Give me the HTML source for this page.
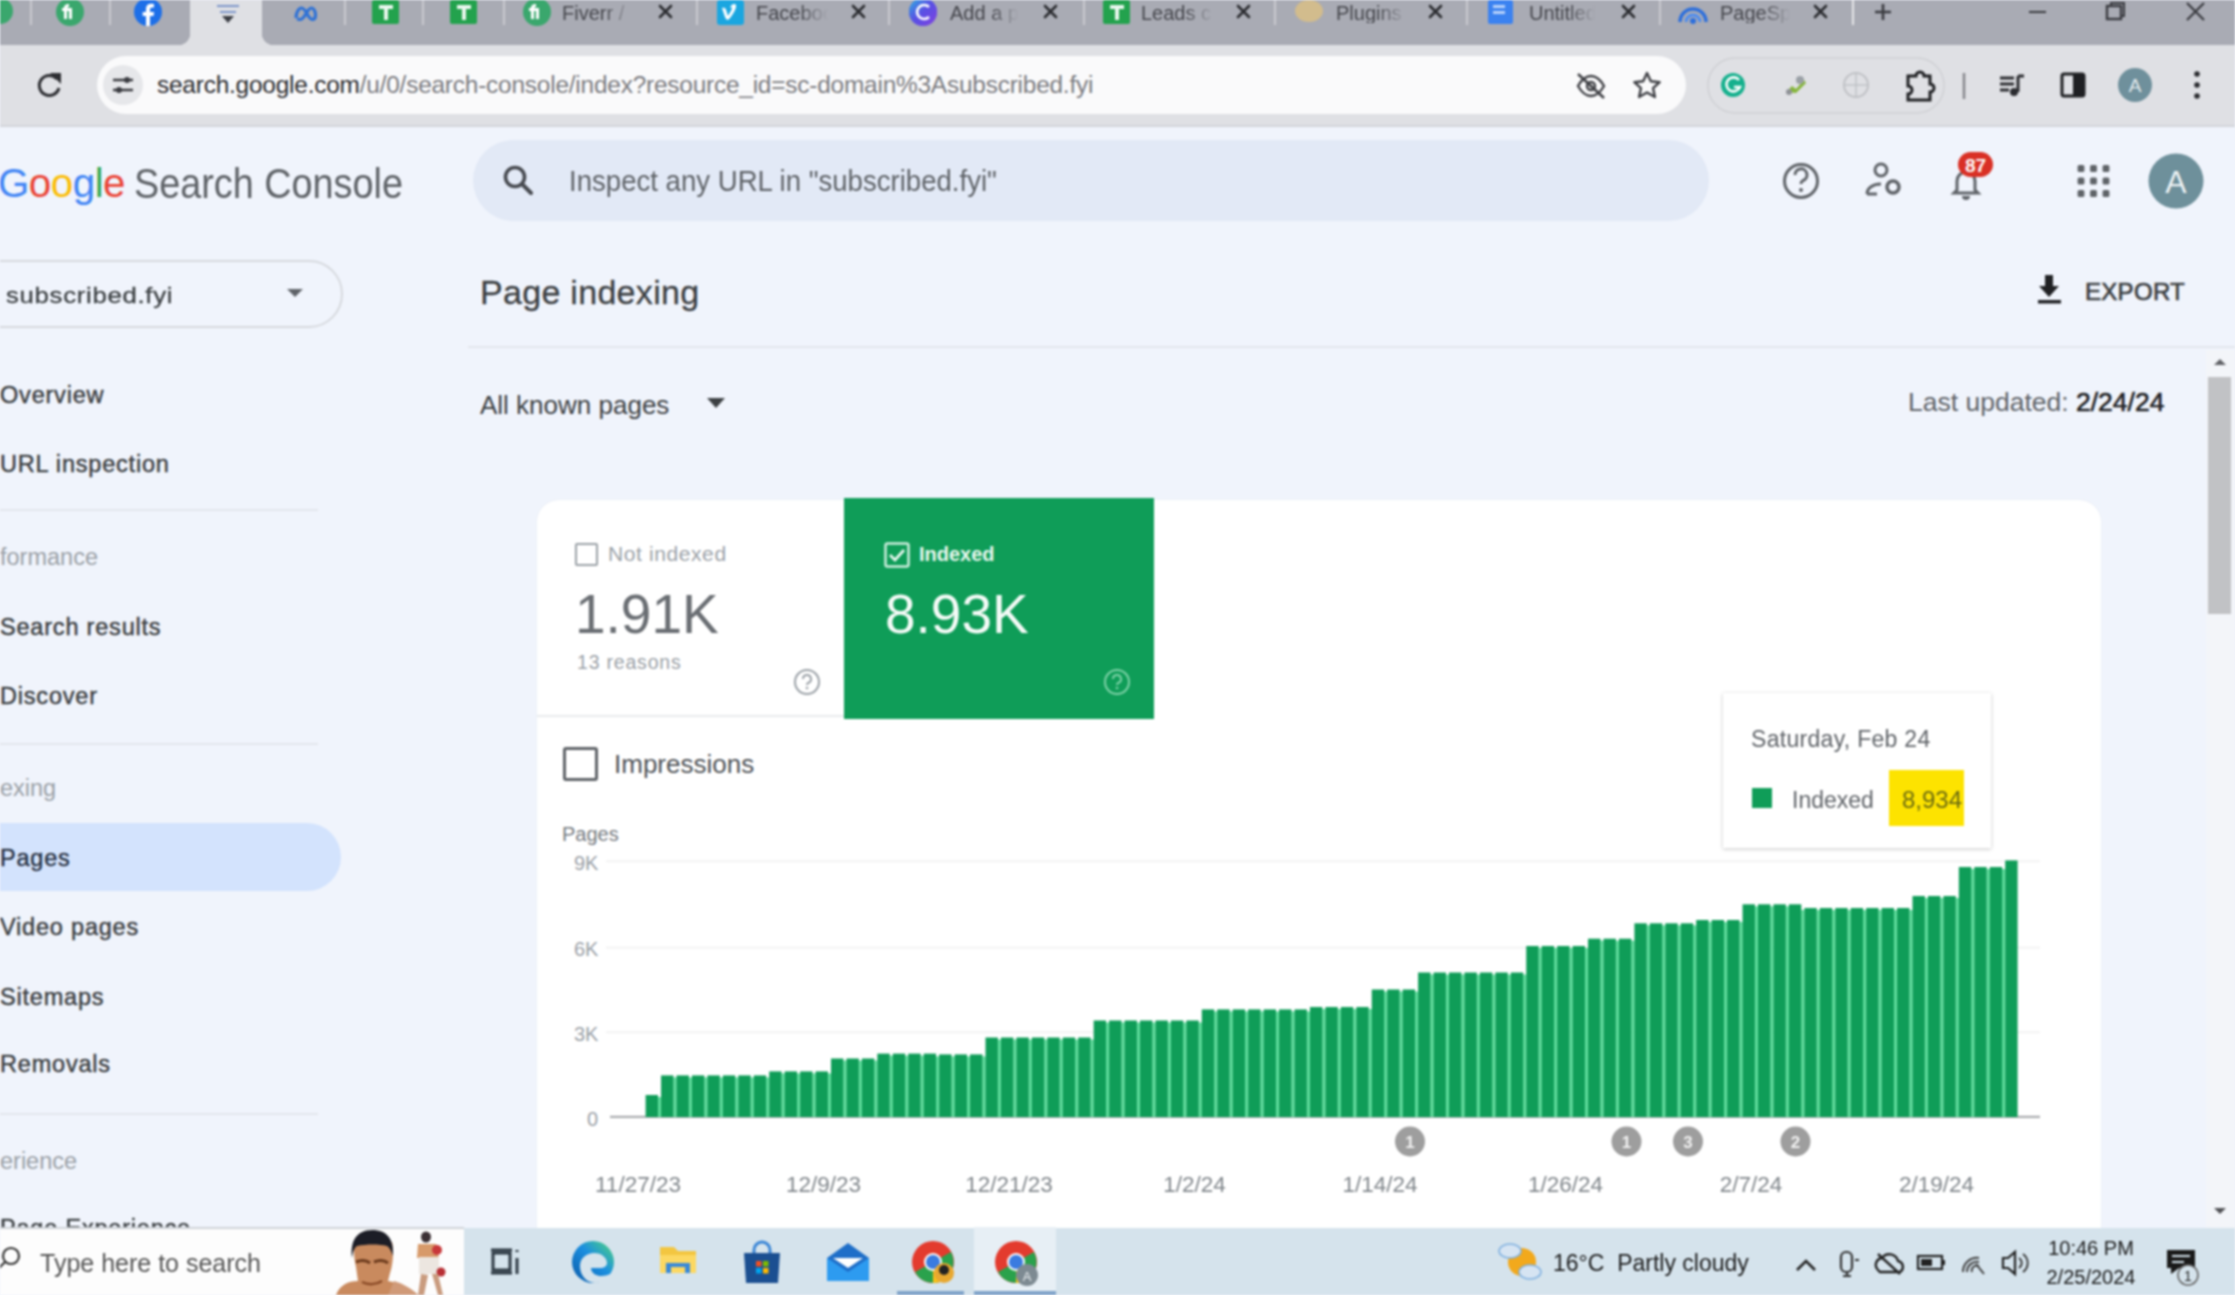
<!DOCTYPE html>
<html><head><meta charset="utf-8">
<style>
*{margin:0;padding:0;box-sizing:border-box}
html{background:#f0f4fc}body{width:2235px;height:1295px;overflow:hidden;background:#f0f4fc;font-family:"Liberation Sans",sans-serif;color:#3c4043}
.a{position:absolute;white-space:nowrap;line-height:1}
#tabs{position:absolute;left:0;top:0;width:2235px;height:46px;background:#a9abb4}
#toolbar{position:absolute;left:0;top:45px;width:2235px;height:80px;background:#dfe0e4}
#tbline{position:absolute;left:0;top:125px;width:2235px;height:2px;background:#d3d5da}
#omni{position:absolute;left:97px;top:56px;width:1589px;height:58px;border-radius:29px;background:#fafafb}
#page{position:absolute;left:0;top:127px;width:2235px;height:1101px;background:#f0f4fc}
.sep{position:absolute;top:0;width:2px;height:25px;background:#c9cad0}
.tt{position:absolute;white-space:nowrap;overflow:hidden;top:3px;font-size:20px;color:#45464c;line-height:1}
.fade{-webkit-mask-image:linear-gradient(90deg,#000 60%,transparent)}
.nav{position:absolute;left:0;font-size:23.5px;color:#3c4043;-webkit-text-stroke:0.45px #3c4043;letter-spacing:0.8px;line-height:1;white-space:nowrap}
.sec{position:absolute;left:0;font-size:23.5px;color:#9aa0a6;line-height:1;white-space:nowrap}
.div{position:absolute;left:0;width:318px;height:2px;background:#e3e6ec}
#card{position:absolute;left:537px;top:500px;width:1564px;height:760px;background:#fff;border-radius:22px;box-shadow:0 0 2px rgba(0,0,0,0.06)}
#taskbar{position:absolute;left:0;top:1228px;width:2235px;height:67px;background:#d5e3ec}
#root{position:absolute;left:0;top:0;width:2235px;height:1295px;overflow:hidden;filter:blur(1px)}
</style></head><body><div id="root">
<!-- ============ TAB STRIP ============ -->
<div id="tabs"></div>
<div class="a" style="left:190px;top:0;width:72px;height:46px;background:#dfe0e4"></div>
<div class="a" style="left:178px;top:33px;width:12px;height:12px;background:radial-gradient(circle at 0 0,#a9abb4 12px,#dfe0e4 12.5px)"></div>
<div class="a" style="left:262px;top:33px;width:12px;height:12px;background:radial-gradient(circle at 100% 0,#a9abb4 12px,#dfe0e4 12.5px)"></div>
<div class="sep" style="left:30px"></div>
<div class="sep" style="left:109px"></div>
<div class="sep" style="left:344px"></div>
<div class="sep" style="left:422px"></div>
<div class="sep" style="left:503px"></div>
<div class="sep" style="left:696px"></div>
<div class="sep" style="left:888px"></div>
<div class="sep" style="left:1083px"></div>
<div class="sep" style="left:1274px"></div>
<div class="sep" style="left:1466px"></div>
<div class="sep" style="left:1659px"></div>
<div class="sep" style="left:1852px;background:#e6e7ea"></div>
<svg class="a" style="left:0;top:0" width="2235" height="46" viewBox="0 0 2235 46">
 <!-- partial green -->
 <circle cx="0" cy="11" r="13" fill="#3aa76d"/>
 <!-- fiverr -->
 <circle cx="70" cy="12" r="14" fill="#3aa76d"/>
 <path d="M64 19v-8h-2v-3h2c0-3 2-4 5-4v3c-1 0-2 0-2 1h5v11h-3v-8h-2v8z" fill="#fff"/>
 <!-- facebook -->
 <circle cx="148" cy="12" r="14" fill="#1d6fe8"/>
 <path d="M150 26v-10h3.5l.5-4h-4v-2.5c0-1 .4-2 2-2h2v-3.5c-.5 0-1.8-.2-3-.2-3 0-5 1.8-5 5v3.2h-3.3v4h3.3v10z" fill="#fff"/>
 <!-- active tab icon -->
 <g fill="none" stroke="#7b94c8" stroke-width="2.2"><path d="M217 6h22M220 12h16"/></g>
 <path d="M222 16l6 7 6-7z" fill="#3a3d44"/>
 <!-- meta -->
 <path d="M296 18c0-6 3-10 5.5-10 3 0 5 5 6.5 7.5 1.5 2.5 3 4 4.5 4 2 0 3-2 3-4.5 0-4-2-7-4-7-2.5 0-4.5 4-6 6.5-1.5 2.5-3.5 5-5.5 5-2.5 0-4-2-4-1.5z" fill="none" stroke="#2f72d6" stroke-width="3.2"/>
 <!-- sheets -->
 <rect x="372" y="0" width="27" height="24" rx="2" fill="#23a24d"/><path d="M379 5h14v4h-5v11h-4v-11h-5z" fill="#eaf7ee"/>
 <rect x="450" y="0" width="27" height="24" rx="2" fill="#23a24d"/><path d="M457 5h14v4h-5v11h-4v-11h-5z" fill="#eaf7ee"/>
 <!-- fiverr tab -->
 <circle cx="537" cy="12" r="14" fill="#3aa76d"/>
 <path d="M531 19v-8h-2v-3h2c0-3 2-4 5-4v3c-1 0-2 0-2 1h5v11h-3v-8h-2v8z" fill="#fff"/>
 <!-- vimeo -->
 <rect x="717" y="0" width="27" height="25" rx="3" fill="#1aa6e0"/><path d="M722 8c3-1 4 0 5 5l1 3c1-2 4-6 4-8 0-1-1-1-2 0 1-4 5-5 6-3 1 3-4 11-7 14-2 2-3 0-4-2z" fill="#fff"/>
 <!-- canva -->
 <circle cx="923" cy="12" r="14" fill="#5a52e0"/><circle cx="923" cy="12" r="14" fill="url(#cg)"/>
 <defs><linearGradient id="cg" x1="0" y1="0" x2="1" y2="1"><stop offset="0" stop-color="#22c5e0"/><stop offset=".5" stop-color="#5b4ee6" stop-opacity=".6"/><stop offset="1" stop-color="#8a3de0"/></linearGradient></defs>
 <path d="M929 7a7 7 0 1 0 0 10" fill="none" stroke="#fff" stroke-width="2.6"/>
 <!-- sheets 2 -->
 <rect x="1103" y="0" width="27" height="24" rx="2" fill="#23a24d"/><path d="M1110 5h14v4h-5v11h-4v-11h-5z" fill="#eaf7ee"/>
 <!-- plugin blob -->
 <ellipse cx="1309" cy="11" rx="14" ry="11" fill="#d9be86" opacity=".85"/>
 <!-- docs -->
 <rect x="1488" y="0" width="25" height="24" rx="2" fill="#3b82f0"/><path d="M1493 5h12v3h-12zM1493 11h12v3h-12z" fill="#b9d3fb"/>
 <!-- pagespeed -->
 <path d="M1680 22a13 13 0 0 1 26 0" fill="none" stroke="#2d6fdc" stroke-width="3.5"/><path d="M1686 22a7 7 0 0 1 14 0" fill="none" stroke="#4d8cf0" stroke-width="3"/><circle cx="1693" cy="21" r="3" fill="#2d6fdc"/>
 <!-- close Xs -->
 <g stroke="#2b2c30" stroke-width="2.6" stroke-linecap="round">
  <path d="M660 6l11 11M671 6l-11 11"/>
  <path d="M853 6l11 11M864 6l-11 11"/>
  <path d="M1045 6l11 11M1056 6l-11 11"/>
  <path d="M1238 6l11 11M1249 6l-11 11"/>
  <path d="M1430 6l11 11M1441 6l-11 11"/>
  <path d="M1623 6l11 11M1634 6l-11 11"/>
  <path d="M1815 6l11 11M1826 6l-11 11"/>
 </g>
 <!-- plus -->
 <path d="M1883 4v16M1875 12h16" stroke="#3a3b40" stroke-width="2.6"/>
 <!-- window controls -->
 <path d="M2029 12h17" stroke="#3a3b40" stroke-width="2"/>
 <rect x="2107" y="6" width="14" height="13" fill="none" stroke="#3a3b40" stroke-width="2.4"/><path d="M2111 6v-3h13v13h-3" fill="none" stroke="#3a3b40" stroke-width="2"/>
 <path d="M2187 3l17 17M2204 3l-17 17" stroke="#3a3b40" stroke-width="2.2"/>
</svg>
<div class="tt fade" style="left:562px;width:70px">Fiverr /</div>
<div class="tt fade" style="left:756px;width:72px">Facebook</div>
<div class="tt fade" style="left:950px;width:68px">Add a p</div>
<div class="tt fade" style="left:1141px;width:72px">Leads c</div>
<div class="tt fade" style="left:1336px;width:70px">Plugins</div>
<div class="tt fade" style="left:1529px;width:66px">Untitled</div>
<div class="tt fade" style="left:1720px;width:70px">PageSpeed</div>

<!-- ============ TOOLBAR ============ -->
<div id="toolbar"></div>
<div id="tbline"></div>
<div id="omni"></div>
<svg class="a" style="left:0;top:45px" width="2235" height="82" viewBox="0 45 2235 82">
 <!-- reload -->
 <path d="M57 79a10 10 0 1 0 2 9" fill="none" stroke="#2e2f33" stroke-width="3"/>
 <path d="M50 73h11v11z" fill="#2e2f33"/>
 <!-- tune icon -->
 <circle cx="123" cy="85" r="20" fill="#e6e7ea"/>
 <path d="M113 80h20M113 90h20" stroke="#3a3b40" stroke-width="2.5"/>
 <circle cx="127" cy="80" r="3" fill="#3a3b40"/><circle cx="119" cy="90" r="3" fill="#3a3b40"/>
 <!-- eye slash -->
 <path d="M1578 86c4-7 9-10 13-10s9 3 13 10c-4 7-9 10-13 10s-9-3-13-10z" fill="none" stroke="#3f4045" stroke-width="2.4"/>
 <circle cx="1591" cy="86" r="4" fill="none" stroke="#3f4045" stroke-width="2.4"/>
 <path d="M1578 74l26 24" stroke="#3f4045" stroke-width="2.6"/>
 <!-- star -->
 <path d="M1647 73l3.8 8.2 8.9 1-6.6 6 1.8 8.8-7.9-4.5-7.9 4.5 1.8-8.8-6.6-6 8.9-1z" fill="none" stroke="#3f4045" stroke-width="2.4" stroke-linejoin="round"/>
 <!-- ext pill -->
 <rect x="1708" y="58" width="236" height="55" rx="27" fill="none" stroke="#cfd0d4" stroke-width="1.5"/>
 <circle cx="1733" cy="85" r="12" fill="#15b08d"/><path d="M1739 80a7 7 0 1 0 1 7h-6" fill="none" stroke="#fff" stroke-width="2.6"/>
 <path d="M1786 92l6-6 4 3 8-9 2 3-10 10z" fill="#86b63c"/><circle cx="1800" cy="80" r="4" fill="#9aa0a6"/><circle cx="1789" cy="92" r="3" fill="#8f9297"/>
 <circle cx="1856" cy="85" r="12" fill="none" stroke="#c0c2c6" stroke-width="2"/><path d="M1844 85h24M1856 73v24" stroke="#c0c2c6" stroke-width="1.5"/>
 <path d="M1908 76h8a4 4 0 0 1 8 0h6v8a4 4 0 0 1 0 8v8h-22v-6a4 4 0 0 0 0-8z" fill="none" stroke="#1f2023" stroke-width="3"/>
 <path d="M1964 73v26" stroke="#85878c" stroke-width="2.5"/>
 <!-- media -->
 <path d="M2000 78h14M2000 84h14M2000 90h9" stroke="#2b2c30" stroke-width="3"/><path d="M2018 76v16" stroke="#2b2c30" stroke-width="3"/><circle cx="2014" cy="92" r="4" fill="#2b2c30"/><path d="M2018 76h6" stroke="#2b2c30" stroke-width="3"/>
 <!-- side panel -->
 <rect x="2062" y="74" width="22" height="22" rx="2" fill="none" stroke="#1f2023" stroke-width="3"/><rect x="2073" y="74" width="11" height="22" fill="#1f2023"/>
 <!-- avatar -->
 <circle cx="2135" cy="85" r="17" fill="#6f909c"/>
 <text x="2135" y="92" font-family="Liberation Sans" font-size="19" fill="#e8eef0" text-anchor="middle">A</text>
 <!-- kebab -->
 <circle cx="2197" cy="74" r="2.8" fill="#2b2c30"/><circle cx="2197" cy="85" r="2.8" fill="#2b2c30"/><circle cx="2197" cy="96" r="2.8" fill="#2b2c30"/>
</svg>
<div class="a" style="left:157px;top:73px;font-size:24.4px;color:#7a7b80;letter-spacing:-0.2px"><span style="color:#2a2b2f">search.google.com</span>/u/0/search-console/index?resource_id=sc-domain%3Asubscribed.fyi</div>

<!-- ============ PAGE ============ -->
<div id="page"></div>
<!-- header -->
<div class="a" style="left:-2px;top:164px;font-size:40.3px;letter-spacing:-0.5px"><span style="color:#4285f4">G</span><span style="color:#ea4335">o</span><span style="color:#fbbc05">o</span><span style="color:#4285f4">g</span><span style="color:#34a853">l</span><span style="color:#ea4335">e</span></div>
<div class="a" style="left:134px;top:163px;font-size:42px;color:#5f6368;transform:scaleX(0.9);transform-origin:0 0">Search Console</div>
<div class="a" style="left:473px;top:140px;width:1236px;height:81px;border-radius:41px;background:#e2e9f6"></div>
<svg class="a" style="left:0;top:127px" width="2235" height="120" viewBox="0 127 2235 120">
 <circle cx="515" cy="177" r="9.5" fill="none" stroke="#474a50" stroke-width="3.6"/>
 <path d="M522 184l9 9" stroke="#474a50" stroke-width="4" stroke-linecap="round"/>
 <!-- help -->
 <circle cx="1801" cy="181" r="16.5" fill="none" stroke="#5f6368" stroke-width="3"/>
 <path d="M1795 175a6 6 0 1 1 8 5.5c-1.5.8-2 1.7-2 3.5" fill="none" stroke="#5f6368" stroke-width="3"/>
 <circle cx="1801" cy="190" r="2" fill="#5f6368"/>
 <!-- admin -->
 <circle cx="1881" cy="170" r="6" fill="none" stroke="#5f6368" stroke-width="3"/>
 <path d="M1867 194c0-6 6-10 14-10" fill="none" stroke="#5f6368" stroke-width="3"/>
 <path d="M1867 194h10" stroke="#5f6368" stroke-width="3"/>
 <circle cx="1893" cy="187" r="6" fill="none" stroke="#5f6368" stroke-width="3.5"/>
 <!-- bell -->
 <path d="M1957 190v-9a9 9 0 0 1 18 0v9l3 3h-24z" fill="none" stroke="#5f6368" stroke-width="3"/>
 <path d="M1962 196a4 4 0 0 0 8 0" fill="#5f6368"/>
 <rect x="1958" y="152" width="35" height="25" rx="12.5" fill="#d93025"/>
 <text x="1975.5" y="172" font-family="Liberation Sans" font-size="19" font-weight="bold" fill="#fff" text-anchor="middle">87</text>
 <!-- apps -->
 <g fill="#5f6368"><rect x="2077.6" y="165.1" width="6.8" height="6.8" rx="1.5"/><rect x="2090.1" y="165.1" width="6.8" height="6.8" rx="1.5"/><rect x="2102.6" y="165.1" width="6.8" height="6.8" rx="1.5"/><rect x="2077.6" y="177.6" width="6.8" height="6.8" rx="1.5"/><rect x="2090.1" y="177.6" width="6.8" height="6.8" rx="1.5"/><rect x="2102.6" y="177.6" width="6.8" height="6.8" rx="1.5"/><rect x="2077.6" y="190.1" width="6.8" height="6.8" rx="1.5"/><rect x="2090.1" y="190.1" width="6.8" height="6.8" rx="1.5"/><rect x="2102.6" y="190.1" width="6.8" height="6.8" rx="1.5"/></g>
 <circle cx="2176" cy="181" r="27.5" fill="#6e909b"/>
 <text x="2176" y="193" font-family="Liberation Sans" font-size="32" fill="#eef3f5" text-anchor="middle">A</text>
</svg>
<div class="a" style="left:569px;top:166px;font-size:29.5px;color:#5f6368;transform:scaleX(0.935);transform-origin:0 0">Inspect any URL in "subscribed.fyi"</div>

<!-- sidebar -->
<div class="a" style="left:-40px;top:260px;width:383px;height:68px;border:2px solid #d6d9de;border-radius:34px"></div>
<div class="a" style="left:6px;top:285px;font-size:22px;color:#3c4043;-webkit-text-stroke:0.3px #3c4043;letter-spacing:0.6px;transform:scaleX(1.17);transform-origin:0 0">subscribed.fyi</div>
<svg class="a" style="left:286px;top:288px" width="18" height="10"><path d="M1 1h16l-8 8z" fill="#5f6368"/></svg>
<div class="nav" style="top:384px">Overview</div>
<div class="nav" style="top:453px">URL inspection</div>
<div class="div" style="top:509px"></div>
<div class="sec" style="top:546px">formance</div>
<div class="nav" style="top:616px">Search results</div>
<div class="nav" style="top:685px">Discover</div>
<div class="div" style="top:743px"></div>
<div class="sec" style="top:777px">exing</div>
<div class="a" style="left:-40px;top:823px;width:381px;height:68px;border-radius:34px;background:#d3e3fd"></div>
<div class="nav" style="top:847px;color:#1f2f4a">Pages</div>
<div class="nav" style="top:916px">Video pages</div>
<div class="nav" style="top:986px">Sitemaps</div>
<div class="nav" style="top:1053px">Removals</div>
<div class="div" style="top:1113px"></div>
<div class="sec" style="top:1150px">erience</div>
<div class="nav" style="top:1217px">Page Experience</div>

<!-- main header -->
<div class="a" style="left:480px;top:275px;font-size:34px;color:#3c4043;letter-spacing:0.3px;-webkit-text-stroke:0.3px #3c4043">Page indexing</div>
<svg class="a" style="left:2035px;top:272px" width="32" height="34"><path d="M10 3h8v11h6l-10 11-10-11h6z" fill="#202124"/><rect x="3" y="28" width="23" height="3.5" fill="#202124"/></svg>
<div class="a" style="left:2085px;top:280px;font-size:24px;color:#3c4043;-webkit-text-stroke:0.7px #3c4043;letter-spacing:0.3px">EXPORT</div>
<div class="a" style="left:468px;top:346px;width:1767px;height:2px;background:#e3e6ec"></div>
<div class="a" style="left:480px;top:391.5px;font-size:26px;color:#3c4043">All known pages</div>
<svg class="a" style="left:706px;top:397px" width="20" height="12"><path d="M1 1h18l-9 10z" fill="#3c4043"/></svg>
<div class="a" style="left:1908px;top:389px;font-size:26.5px;color:#5f6368">Last updated: <span style="color:#202124;-webkit-text-stroke:0.6px #202124">2/24/24</span></div>

<!-- scrollbar -->
<div class="a" style="left:2206px;top:350px;width:29px;height:878px;background:#f3f5f9"></div>
<div class="a" style="left:2208px;top:377px;width:23px;height:237px;background:#c1c2c5"></div>
<svg class="a" style="left:2212px;top:357px" width="16" height="10"><path d="M2 8h12l-6-6z" fill="#606166"/></svg>
<svg class="a" style="left:2212px;top:1206px" width="16" height="10"><path d="M2 2h12l-6 6z" fill="#505155"/></svg>

<!-- card -->
<div id="card"></div>
<div class="a" style="left:537px;top:715px;width:307px;height:2px;background:#e8eaed"></div>
<div class="a" style="left:575px;top:543px;width:23px;height:23px;border:2.5px solid #9aa0a6;border-radius:2px"></div>
<div class="a" style="left:608px;top:543px;font-size:21px;color:#9aa0a6;letter-spacing:0.6px">Not indexed</div>
<div class="a" style="left:575px;top:587px;font-size:55px;color:#6a6e73">1.91K</div>
<div class="a" style="left:577px;top:653px;font-size:19.5px;color:#9aa0a6;letter-spacing:0.8px">13 reasons</div>
<svg class="a" style="left:792px;top:667px" width="30" height="30"><circle cx="15" cy="15" r="12" fill="none" stroke="#9aa0a6" stroke-width="2"/><path d="M11 12a4 4 0 1 1 5.5 3.7c-1 .5-1.5 1.2-1.5 2.3" fill="none" stroke="#9aa0a6" stroke-width="2"/><circle cx="15" cy="21" r="1.3" fill="#9aa0a6"/></svg>

<div class="a" style="left:844px;top:498px;width:310px;height:221px;background:#0f9d58"></div>
<svg class="a" style="left:884px;top:542px" width="26" height="26"><rect x="1.5" y="1.5" width="23" height="23" fill="none" stroke="#cdeedd" stroke-width="2.5" rx="2"/><path d="M6 13l5 5 9-10" fill="none" stroke="#e6f7ee" stroke-width="2.8"/></svg>
<div class="a" style="left:919px;top:544px;font-size:20px;color:#e9f8ef;font-weight:bold">Indexed</div>
<div class="a" style="left:885px;top:587px;font-size:55px;color:#f4fbf7">8.93K</div>
<svg class="a" style="left:1102px;top:667px" width="30" height="30"><circle cx="15" cy="15" r="12" fill="none" stroke="#7fd3a8" stroke-width="2"/><path d="M11 12a4 4 0 1 1 5.5 3.7c-1 .5-1.5 1.2-1.5 2.3" fill="none" stroke="#7fd3a8" stroke-width="2"/><circle cx="15" cy="21" r="1.3" fill="#7fd3a8"/></svg>

<div class="a" style="left:563px;top:747px;width:35px;height:34px;border:3px solid #5f6368;border-radius:3px"></div>
<div class="a" style="left:614px;top:751px;font-size:26px;color:#4d5156">Impressions</div>

<div class="a" style="left:562px;top:824px;font-size:20px;color:#757a80">Pages</div>
<div class="a" style="left:574px;top:853px;font-size:20px;color:#9aa0a6">9K</div>
<div class="a" style="left:574px;top:939px;font-size:20px;color:#9aa0a6">6K</div>
<div class="a" style="left:574px;top:1024px;font-size:20px;color:#9aa0a6">3K</div>
<div class="a" style="left:587px;top:1109px;font-size:20px;color:#9aa0a6">0</div>

<svg class="a" style="left:0;top:0" width="2235" height="1228" viewBox="0 0 2235 1228">
 <g fill="#f0f0f0"><rect x="606" y="860.5" width="1434" height="1.6"/><rect x="606" y="946.8" width="1434" height="1.6"/><rect x="606" y="1031.5" width="1434" height="1.6"/></g>
 <rect x="610" y="1115.8" width="1430" height="2.2" fill="#a9abae"/>
 <g fill="#5fdc9c"><rect x="657.85" y="1097.0" width="3.4" height="20.0"/><rect x="673.30" y="1077.4" width="3.4" height="39.6"/><rect x="688.75" y="1077.4" width="3.4" height="39.6"/><rect x="704.20" y="1077.4" width="3.4" height="39.6"/><rect x="719.65" y="1077.4" width="3.4" height="39.6"/><rect x="735.10" y="1077.4" width="3.4" height="39.6"/><rect x="750.55" y="1077.4" width="3.4" height="39.6"/><rect x="766.00" y="1077.4" width="3.4" height="39.6"/><rect x="781.45" y="1073.4" width="3.4" height="43.6"/><rect x="796.90" y="1073.4" width="3.4" height="43.6"/><rect x="812.35" y="1073.4" width="3.4" height="43.6"/><rect x="827.80" y="1073.4" width="3.4" height="43.6"/><rect x="843.25" y="1060.5" width="3.4" height="56.5"/><rect x="858.70" y="1060.5" width="3.4" height="56.5"/><rect x="874.15" y="1060.5" width="3.4" height="56.5"/><rect x="889.60" y="1055.6" width="3.4" height="61.4"/><rect x="905.05" y="1055.6" width="3.4" height="61.4"/><rect x="920.50" y="1055.6" width="3.4" height="61.4"/><rect x="935.95" y="1056.4" width="3.4" height="60.6"/><rect x="951.40" y="1056.4" width="3.4" height="60.6"/><rect x="966.85" y="1056.4" width="3.4" height="60.6"/><rect x="982.30" y="1056.4" width="3.4" height="60.6"/><rect x="997.75" y="1039.5" width="3.4" height="77.5"/><rect x="1013.20" y="1039.5" width="3.4" height="77.5"/><rect x="1028.65" y="1039.5" width="3.4" height="77.5"/><rect x="1044.10" y="1039.5" width="3.4" height="77.5"/><rect x="1059.55" y="1039.5" width="3.4" height="77.5"/><rect x="1075.00" y="1039.5" width="3.4" height="77.5"/><rect x="1090.45" y="1039.5" width="3.4" height="77.5"/><rect x="1105.90" y="1022.5" width="3.4" height="94.5"/><rect x="1121.35" y="1022.5" width="3.4" height="94.5"/><rect x="1136.80" y="1022.5" width="3.4" height="94.5"/><rect x="1152.25" y="1022.5" width="3.4" height="94.5"/><rect x="1167.70" y="1022.5" width="3.4" height="94.5"/><rect x="1183.15" y="1022.5" width="3.4" height="94.5"/><rect x="1198.60" y="1022.5" width="3.4" height="94.5"/><rect x="1214.05" y="1011.4" width="3.4" height="105.6"/><rect x="1229.50" y="1011.4" width="3.4" height="105.6"/><rect x="1244.95" y="1011.4" width="3.4" height="105.6"/><rect x="1260.40" y="1011.4" width="3.4" height="105.6"/><rect x="1275.85" y="1011.4" width="3.4" height="105.6"/><rect x="1291.30" y="1011.4" width="3.4" height="105.6"/><rect x="1306.75" y="1011.4" width="3.4" height="105.6"/><rect x="1322.20" y="1009.0" width="3.4" height="108.0"/><rect x="1337.65" y="1009.0" width="3.4" height="108.0"/><rect x="1353.10" y="1009.0" width="3.4" height="108.0"/><rect x="1368.55" y="1009.0" width="3.4" height="108.0"/><rect x="1384.00" y="991.5" width="3.4" height="125.5"/><rect x="1399.45" y="991.5" width="3.4" height="125.5"/><rect x="1414.90" y="991.5" width="3.4" height="125.5"/><rect x="1430.35" y="974.5" width="3.4" height="142.5"/><rect x="1445.80" y="974.5" width="3.4" height="142.5"/><rect x="1461.25" y="974.5" width="3.4" height="142.5"/><rect x="1476.70" y="974.5" width="3.4" height="142.5"/><rect x="1492.15" y="974.5" width="3.4" height="142.5"/><rect x="1507.60" y="974.5" width="3.4" height="142.5"/><rect x="1523.05" y="974.5" width="3.4" height="142.5"/><rect x="1538.50" y="948.0" width="3.4" height="169.0"/><rect x="1553.95" y="948.0" width="3.4" height="169.0"/><rect x="1569.40" y="948.0" width="3.4" height="169.0"/><rect x="1584.85" y="948.0" width="3.4" height="169.0"/><rect x="1600.30" y="940.7" width="3.4" height="176.3"/><rect x="1615.75" y="940.7" width="3.4" height="176.3"/><rect x="1631.20" y="940.7" width="3.4" height="176.3"/><rect x="1646.65" y="925.3" width="3.4" height="191.7"/><rect x="1662.10" y="925.3" width="3.4" height="191.7"/><rect x="1677.55" y="925.3" width="3.4" height="191.7"/><rect x="1693.00" y="925.3" width="3.4" height="191.7"/><rect x="1708.45" y="922.0" width="3.4" height="195.0"/><rect x="1723.90" y="922.0" width="3.4" height="195.0"/><rect x="1739.35" y="922.0" width="3.4" height="195.0"/><rect x="1754.80" y="906.3" width="3.4" height="210.7"/><rect x="1770.25" y="906.3" width="3.4" height="210.7"/><rect x="1785.70" y="906.3" width="3.4" height="210.7"/><rect x="1801.15" y="910.0" width="3.4" height="207.0"/><rect x="1816.60" y="910.0" width="3.4" height="207.0"/><rect x="1832.05" y="910.0" width="3.4" height="207.0"/><rect x="1847.50" y="910.0" width="3.4" height="207.0"/><rect x="1862.95" y="910.0" width="3.4" height="207.0"/><rect x="1878.40" y="910.0" width="3.4" height="207.0"/><rect x="1893.85" y="910.0" width="3.4" height="207.0"/><rect x="1909.30" y="910.0" width="3.4" height="207.0"/><rect x="1924.75" y="898.0" width="3.4" height="219.0"/><rect x="1940.20" y="898.0" width="3.4" height="219.0"/><rect x="1955.65" y="898.0" width="3.4" height="219.0"/><rect x="1971.10" y="869.0" width="3.4" height="248.0"/><rect x="1986.55" y="869.0" width="3.4" height="248.0"/><rect x="2002.00" y="869.0" width="3.4" height="248.0"/></g><g fill="#0f9d58"><rect x="645.60" y="1095.0" width="12.4" height="22.0"/><rect x="661.05" y="1075.4" width="12.4" height="41.6"/><rect x="676.50" y="1075.4" width="12.4" height="41.6"/><rect x="691.95" y="1075.4" width="12.4" height="41.6"/><rect x="707.40" y="1075.4" width="12.4" height="41.6"/><rect x="722.85" y="1075.4" width="12.4" height="41.6"/><rect x="738.30" y="1075.4" width="12.4" height="41.6"/><rect x="753.75" y="1075.4" width="12.4" height="41.6"/><rect x="769.20" y="1071.4" width="12.4" height="45.6"/><rect x="784.65" y="1071.4" width="12.4" height="45.6"/><rect x="800.10" y="1071.4" width="12.4" height="45.6"/><rect x="815.55" y="1071.4" width="12.4" height="45.6"/><rect x="831.00" y="1058.5" width="12.4" height="58.5"/><rect x="846.45" y="1058.5" width="12.4" height="58.5"/><rect x="861.90" y="1058.5" width="12.4" height="58.5"/><rect x="877.35" y="1053.6" width="12.4" height="63.4"/><rect x="892.80" y="1053.6" width="12.4" height="63.4"/><rect x="908.25" y="1053.6" width="12.4" height="63.4"/><rect x="923.70" y="1053.6" width="12.4" height="63.4"/><rect x="939.15" y="1054.4" width="12.4" height="62.6"/><rect x="954.60" y="1054.4" width="12.4" height="62.6"/><rect x="970.05" y="1054.4" width="12.4" height="62.6"/><rect x="985.50" y="1037.5" width="12.4" height="79.5"/><rect x="1000.95" y="1037.5" width="12.4" height="79.5"/><rect x="1016.40" y="1037.5" width="12.4" height="79.5"/><rect x="1031.85" y="1037.5" width="12.4" height="79.5"/><rect x="1047.30" y="1037.5" width="12.4" height="79.5"/><rect x="1062.75" y="1037.5" width="12.4" height="79.5"/><rect x="1078.20" y="1037.5" width="12.4" height="79.5"/><rect x="1093.65" y="1020.5" width="12.4" height="96.5"/><rect x="1109.10" y="1020.5" width="12.4" height="96.5"/><rect x="1124.55" y="1020.5" width="12.4" height="96.5"/><rect x="1140.00" y="1020.5" width="12.4" height="96.5"/><rect x="1155.45" y="1020.5" width="12.4" height="96.5"/><rect x="1170.90" y="1020.5" width="12.4" height="96.5"/><rect x="1186.35" y="1020.5" width="12.4" height="96.5"/><rect x="1201.80" y="1009.4" width="12.4" height="107.6"/><rect x="1217.25" y="1009.4" width="12.4" height="107.6"/><rect x="1232.70" y="1009.4" width="12.4" height="107.6"/><rect x="1248.15" y="1009.4" width="12.4" height="107.6"/><rect x="1263.60" y="1009.4" width="12.4" height="107.6"/><rect x="1279.05" y="1009.4" width="12.4" height="107.6"/><rect x="1294.50" y="1009.4" width="12.4" height="107.6"/><rect x="1309.95" y="1007.0" width="12.4" height="110.0"/><rect x="1325.40" y="1007.0" width="12.4" height="110.0"/><rect x="1340.85" y="1007.0" width="12.4" height="110.0"/><rect x="1356.30" y="1007.0" width="12.4" height="110.0"/><rect x="1371.75" y="989.5" width="12.4" height="127.5"/><rect x="1387.20" y="989.5" width="12.4" height="127.5"/><rect x="1402.65" y="989.5" width="12.4" height="127.5"/><rect x="1418.10" y="972.5" width="12.4" height="144.5"/><rect x="1433.55" y="972.5" width="12.4" height="144.5"/><rect x="1449.00" y="972.5" width="12.4" height="144.5"/><rect x="1464.45" y="972.5" width="12.4" height="144.5"/><rect x="1479.90" y="972.5" width="12.4" height="144.5"/><rect x="1495.35" y="972.5" width="12.4" height="144.5"/><rect x="1510.80" y="972.5" width="12.4" height="144.5"/><rect x="1526.25" y="946.0" width="12.4" height="171.0"/><rect x="1541.70" y="946.0" width="12.4" height="171.0"/><rect x="1557.15" y="946.0" width="12.4" height="171.0"/><rect x="1572.60" y="946.0" width="12.4" height="171.0"/><rect x="1588.05" y="938.7" width="12.4" height="178.3"/><rect x="1603.50" y="938.7" width="12.4" height="178.3"/><rect x="1618.95" y="938.7" width="12.4" height="178.3"/><rect x="1634.40" y="923.3" width="12.4" height="193.7"/><rect x="1649.85" y="923.3" width="12.4" height="193.7"/><rect x="1665.30" y="923.3" width="12.4" height="193.7"/><rect x="1680.75" y="923.3" width="12.4" height="193.7"/><rect x="1696.20" y="920.0" width="12.4" height="197.0"/><rect x="1711.65" y="920.0" width="12.4" height="197.0"/><rect x="1727.10" y="920.0" width="12.4" height="197.0"/><rect x="1742.55" y="904.3" width="12.4" height="212.7"/><rect x="1758.00" y="904.3" width="12.4" height="212.7"/><rect x="1773.45" y="904.3" width="12.4" height="212.7"/><rect x="1788.90" y="904.3" width="12.4" height="212.7"/><rect x="1804.35" y="908.0" width="12.4" height="209.0"/><rect x="1819.80" y="908.0" width="12.4" height="209.0"/><rect x="1835.25" y="908.0" width="12.4" height="209.0"/><rect x="1850.70" y="908.0" width="12.4" height="209.0"/><rect x="1866.15" y="908.0" width="12.4" height="209.0"/><rect x="1881.60" y="908.0" width="12.4" height="209.0"/><rect x="1897.05" y="908.0" width="12.4" height="209.0"/><rect x="1912.50" y="896.0" width="12.4" height="221.0"/><rect x="1927.95" y="896.0" width="12.4" height="221.0"/><rect x="1943.40" y="896.0" width="12.4" height="221.0"/><rect x="1958.85" y="867.0" width="12.4" height="250.0"/><rect x="1974.30" y="867.0" width="12.4" height="250.0"/><rect x="1989.75" y="867.0" width="12.4" height="250.0"/><rect x="2005.20" y="860.4" width="12.4" height="256.6"/></g>
 <g fill="#9e9e9e"><circle cx="1410" cy="1141.5" r="15"/><circle cx="1626.5" cy="1141.5" r="15"/><circle cx="1688" cy="1141.5" r="15"/><circle cx="1795.5" cy="1141.5" r="15"/></g>
 <g font-family="Liberation Sans" font-size="17" font-weight="bold" fill="#f2f2f2" text-anchor="middle"><text x="1410" y="1147.5">1</text><text x="1626.5" y="1147.5">1</text><text x="1688" y="1147.5">3</text><text x="1795.5" y="1147.5">2</text></g>
 <g font-family="Liberation Sans" font-size="22.5" fill="#80868b" text-anchor="middle">
  <text x="638" y="1191.5">11/27/23</text><text x="823.5" y="1191.5">12/9/23</text><text x="1009" y="1191.5">12/21/23</text><text x="1194.5" y="1191.5">1/2/24</text>
  <text x="1380" y="1191.5">1/14/24</text><text x="1565.5" y="1191.5">1/26/24</text><text x="1751" y="1191.5">2/7/24</text><text x="1936.5" y="1191.5">2/19/24</text>
 </g>
</svg>

<!-- tooltip -->
<div class="a" style="left:1723px;top:693px;width:268px;height:155px;background:#fff;box-shadow:0 1px 4px rgba(0,0,0,0.22)"></div>
<div class="a" style="left:1751px;top:728px;font-size:23px;color:#5f6368;letter-spacing:0.3px">Saturday, Feb 24</div>
<div class="a" style="left:1752px;top:788px;width:20px;height:20px;background:#0f9d58"></div>
<div class="a" style="left:1792px;top:789px;font-size:23px;color:#5f6368">Indexed</div>
<div class="a" style="left:1889px;top:770px;width:75px;height:56px;background:#fde300"></div>
<div class="a" style="left:1902px;top:788px;font-size:24px;color:#6b6b10">8,934</div>


<!-- ============ TASKBAR ============ -->
<div id="taskbar"></div>
<div class="a" style="left:0;top:1227px;width:464px;height:68px;background:#fdfdfd;border-top:2px solid #cfd3d8"></div>
<svg class="a" style="left:0;top:1227px" width="2235" height="68" viewBox="0 1227 2235 68">
 <!-- search icon -->
 <circle cx="11" cy="1256" r="8" fill="none" stroke="#333" stroke-width="2.2"/><path d="M5 1262l-6 6" stroke="#333" stroke-width="2.2"/>
 <!-- Ali figure -->
 <path d="M336 1295c4-10 12-14 22-14l-2-14c-2-8-3-19-1-25h37c2 8 1 23-2 31l-2 8c10 2 22 6 30 14z" fill="#c98a5e"/>
 <path d="M356 1262c5-2 10-2 14 1M374 1262c5-2 10-2 14 1" stroke="#6b3a1c" stroke-width="3" fill="none"/>
 <path d="M362 1282c6 3 14 3 20-1" stroke="#8a4a26" stroke-width="2.5" fill="none"/>
 <path d="M352 1258c-2-16 4-28 20-28s22 10 21 26c-2-6-4-9-6-10-8-2-20-2-30 0-3 2-4 6-5 12z" fill="#1c1d26"/>
 <path d="M394 1281c10 3 18 8 24 14h-30z" fill="#d09a78"/>
 <ellipse cx="426" cy="1237" rx="5" ry="5.5" fill="#3b3034"/>
 <path d="M418 1244h18l3 14h-22z" fill="#d79a6a"/>
 <rect x="419" y="1257" width="20" height="17" fill="#ece6e0"/>
 <circle cx="437" cy="1250" r="5" fill="#c8383a"/><circle cx="441" cy="1272" r="4.5" fill="#b83035"/>
 <path d="M421 1274l-3 21h6l4-20zM432 1274l6 21h5l-5-21z" fill="#c99b7e"/>
 <!-- task view -->
 <g fill="none" stroke="#2e3a44" stroke-width="3"><rect x="493" y="1253" width="17" height="17"/><path d="M491 1250h21M491 1273h21"/></g><path d="M517 1250v2M517 1258v16" stroke="#2e3a44" stroke-width="3"/>
 <!-- edge -->
 <defs><linearGradient id="eg" x1="0" y1="1" x2="1" y2="0"><stop offset="0" stop-color="#0b5aa8"/><stop offset=".55" stop-color="#1b8fe0"/><stop offset="1" stop-color="#52d87a"/></linearGradient></defs>
 <circle cx="593" cy="1262" r="21" fill="url(#eg)"/>
 <path d="M580 1266c0-8 7-13 14-13 8 0 13 5 13 10 0 3-3 5-7 5h-9c0 5 5 8 10 8 4 0 8-1 11-3-3 6-9 10-16 10-9 0-16-7-16-17z" fill="#d5e3ec"/>
 <!-- explorer -->
 <path d="M660 1247h14l4 4h18v22h-36z" fill="#f3c640"/><rect x="660" y="1255" width="36" height="18" fill="#fcd862"/><path d="M666 1273v-10h24v10h-5v-6h-14v6z" fill="#3a8ad8"/>
 <!-- store -->
 <path d="M744 1253h36l-2 30h-32z" fill="#1b4f91"/><path d="M754 1253v-3a8 8 0 0 1 16 0v3" fill="none" stroke="#3b86d6" stroke-width="3"/>
 <rect x="756" y="1261" width="5.5" height="5.5" fill="#f25022"/><rect x="763" y="1261" width="5.5" height="5.5" fill="#7fba00"/><rect x="756" y="1268" width="5.5" height="5.5" fill="#00a4ef"/><rect x="763" y="1268" width="5.5" height="5.5" fill="#ffb900"/>
 <!-- mail -->
 <path d="M827 1258l21-15 21 15v23h-42z" fill="#1e6ec8"/><path d="M827 1258l21 14 21-14v23h-42z" fill="#2d9bf0"/><path d="M833 1258h30l-15 10z" fill="#fff"/>
 <!-- chrome 1 -->
 <rect x="897" y="1227" width="67" height="68" fill="#d9e6ef" opacity=".0"/>
 <circle cx="933" cy="1262" r="21" fill="#e33b2e"/><path d="M933 1262l-18 10a21 21 0 0 0 18 11z" fill="#2aa24c"/><path d="M933 1262l18 -10a21 21 0 0 1-18 31z" fill="#2aa24c"/><path d="M933 1262v21a21 21 0 0 0 18-10z" fill="#fbc117"/>
 <circle cx="933" cy="1262" r="9" fill="#fff"/><circle cx="933" cy="1262" r="7" fill="#3a7be0"/>
 <circle cx="944" cy="1273" r="10" fill="#e8a830"/><circle cx="944" cy="1270" r="5" fill="#222"/>
 <rect x="897" y="1291" width="67" height="4" fill="#7ea2c8"/>
 <!-- chrome 2 -->
 <rect x="974" y="1227" width="82" height="68" fill="#e7eff5"/>
 <circle cx="1016" cy="1262" r="21" fill="#e33b2e"/><path d="M1016 1262l-18 10a21 21 0 0 0 18 11z" fill="#2aa24c"/><path d="M1016 1262l18 -10a21 21 0 0 1-18 31z" fill="#2aa24c"/><path d="M1016 1262v21a21 21 0 0 0 18-10z" fill="#fbc117"/>
 <circle cx="1016" cy="1262" r="9" fill="#fff"/><circle cx="1016" cy="1262" r="7" fill="#3a7be0"/>
 <circle cx="1027" cy="1275" r="11" fill="#7d8a92"/><text x="1027" y="1281" font-family="Liberation Sans" font-size="13" fill="#e8eef0" text-anchor="middle">A</text>
 <rect x="974" y="1291" width="82" height="4" fill="#7ea2c8"/>
 <!-- weather -->
 <circle cx="1522" cy="1262" r="14" fill="#f2a91c"/><ellipse cx="1510" cy="1251" rx="11" ry="7" fill="#d6e4f2" stroke="#7fb0e0" stroke-width="1.5"/><ellipse cx="1530" cy="1272" rx="11" ry="7" fill="#d6e4f2" stroke="#7fb0e0" stroke-width="1.5"/>
 <!-- tray icons -->
 <path d="M1797 1270l9-9 9 9" fill="none" stroke="#222" stroke-width="2.6"/>
 <rect x="1841" y="1252" width="11" height="20" rx="5" fill="none" stroke="#333" stroke-width="2.2"/><path d="M1855 1260h4M1847 1272v4M1843 1276h8" stroke="#333" stroke-width="2"/>
 <path d="M1878 1270a7 7 0 0 1 4-12 9 9 0 0 1 16 3 6 6 0 0 1 2 11h-20zM1878 1254l22 20" fill="none" stroke="#222" stroke-width="2.4"/>
 <rect x="1918" y="1256" width="24" height="13" fill="none" stroke="#222" stroke-width="2.2"/><rect x="1921" y="1259" width="11" height="7" fill="#222"/><rect x="1942" y="1260" width="3" height="5" fill="#222"/>
 <path d="M1963 1272a14 14 0 0 1 16-14M1967 1272a10 10 0 0 1 12-10M1972 1272a5 5 0 0 1 7-6" fill="none" stroke="#444" stroke-width="2"/><path d="M1976 1264l8 10" stroke="#444" stroke-width="2"/>
 <path d="M2003 1258h5l7-6v22l-7-6h-5z" fill="none" stroke="#222" stroke-width="2.2"/><path d="M2019 1258a6 6 0 0 1 0 10M2023 1254a11 11 0 0 1 0 18" fill="none" stroke="#333" stroke-width="1.8"/>
 <!-- notification -->
 <path d="M2167 1250h28v18h-16l-8 6v-6h-4z" fill="#1a1a1a"/><path d="M2172 1256h18M2172 1262h12" stroke="#d5e3ec" stroke-width="2"/>
 <circle cx="2188" cy="1275" r="10" fill="#d5e3ec" stroke="#666" stroke-width="1.6"/><text x="2188" y="1281" font-family="Liberation Sans" font-size="14" fill="#222" text-anchor="middle">1</text>
</svg>
<div class="a" style="left:40px;top:1251px;font-size:25px;color:#555">Type here to search</div>
<div class="a" style="left:1553px;top:1252px;font-size:23px;color:#1b1b1b">16°C&nbsp; Partly cloudy</div>
<div class="a" style="left:2046px;top:1234px;font-size:20px;color:#1b1b1b;text-align:center;width:90px;line-height:29px;white-space:normal">10:46 PM<br>2/25/2024</div>

</div></body></html>
